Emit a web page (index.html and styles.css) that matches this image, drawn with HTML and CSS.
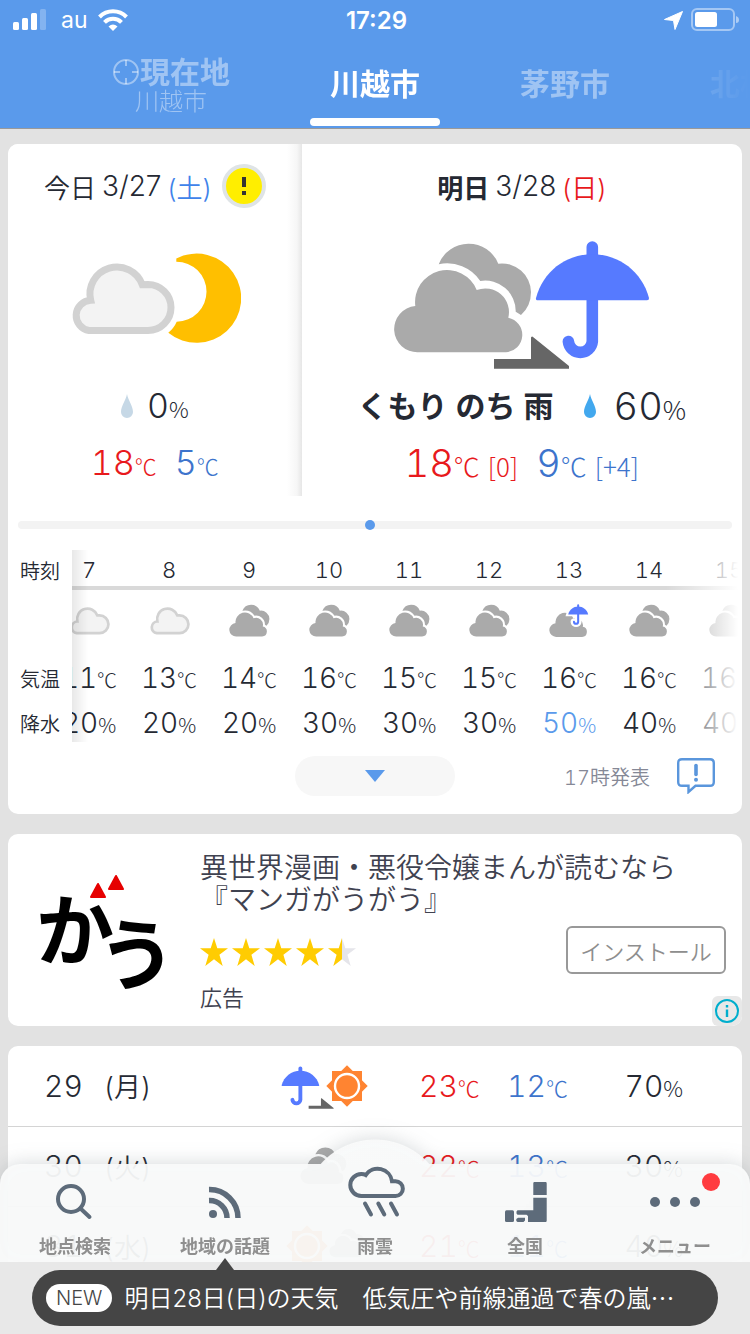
FILE: index.html
```html
<!DOCTYPE html>
<html lang="ja">
<head>
    <meta charset="utf-8">
    <meta name="viewport" content="width=device-width">
    <title>川越市の天気</title>
    <link rel="stylesheet" href="styles.css">
</head>
<body>
    <!-- shared weather icons -->
    <svg class="sprite" aria-hidden="true">
        <defs>
            <symbol id="cloud-light" viewBox="0 10 106 72">
                <path d="M20 77.5A15.2 15.2 0 0 1 21.7 47.3A27 27 0 0 1 73.3 31.7L79 31.5A23 23 0 0 1 79 77.5Z" fill="#f3f3f3" stroke="#d2d2d2" stroke-width="7"/>
            </symbol>
            <path id="front" d="M25 112.3A23.2 23.2 0 0 1 22.3 66A32 32 0 0 1 83.7 50A23.7 23.7 0 0 1 115.3 77.7A17.5 17.5 0 0 1 113 112.3Z"/>
            <g id="clouds" fill="#aaa">
                <use href="#front"/>
                <path d="M45.7 24.3A32 32 0 0 1 105.3 23.7A29 29 0 0 1 138 52Q138 66 128 75L122.7 71.7A30.5 30.5 0 0 0 87.3 41A40 40 0 0 0 45.7 24.3Z"/>
            </g>
            <symbol id="cloud-dark" viewBox="0 3 140 112"><use href="#clouds"/></symbol>
            <g id="umbrella">
                <path d="M199.3 7V101.5A12 12 0 0 1 175.4 101.5" fill="none" stroke="#567aff" stroke-width="11.6" stroke-linecap="round"/>
                <path d="M143 58C150 32 172 14.3 199.3 14.3S249 32 256 58Q256.3 60.3 254 60.3H145Q142.4 60.3 143 58Z" fill="#567aff"/>
            </g>
            <path id="then" d="M101 119H138V97.5Q139 96 140 97L176 126V128.7H101Z" fill="#666"/>
            <symbol id="cloud-rain" viewBox="0 0 140 116">
                <use href="#front" fill="#aaa"/>
                <g transform="translate(-20 0) scale(.6)">
                    <path d="M199.3 7V101.5A12 12 0 0 1 175.4 101.5" fill="none" stroke="#fff" stroke-width="38" stroke-linecap="round"/>
                    <path d="M143 58C150 32 172 14 199 14S249 32 256 58Z" fill="#fff" stroke="#fff" stroke-width="24"/>
                    <use href="#umbrella"/>
                </g>
            </symbol>
            <g id="sun">
                <path d="M-15-15H15V15H-15Z" fill="#ff8431"/>
                <path d="M0-20.7L20.7 0L0 20.7L-20.7 0Z" fill="#ff8431"/>
                <circle r="12" fill="none" stroke="#fff" stroke-width="2.4"/>
            </g>
            <symbol id="drop" viewBox="0 0 12 24">
                <path d="M6 0C7 6 12 12 12 18A6 6 0 0 1 0 18C0 12 5 6 6 0Z"/>
            </symbol>
            <symbol id="star" viewBox="0 0 28 28">
                <path d="M14 0L17.3 10.3H28L19.4 16.8L22.7 28L14 21.3L5.3 28L8.6 16.8L0 10.3H10.7Z"/>
            </symbol>
        </defs>
    </svg>

    <header class="header">
        <div class="status">
            <div class="status-left">
                <svg width="34" height="22" viewBox="0 0 34 22" fill="#fff">
                    <rect x="0" y="13" width="6" height="8" rx="1.5"/>
                    <rect x="9" y="9" width="6" height="12" rx="1.5"/>
                    <rect x="18" y="4" width="6" height="17" rx="1.5"/>
                    <rect x="27" y="0" width="6" height="21" rx="1.5" opacity=".25"/>
                </svg>
                <span>au</span>
                <svg width="30" height="22" viewBox="0 0 30 22" fill="none" stroke="#fff" stroke-width="4">
                    <path d="M1.5 8A19 19 0 0 1 28.5 8"/>
                    <path d="M6.5 13.3A12 12 0 0 1 23.5 13.3"/>
                    <path d="M10.5 17.5Q15 13.5 19.5 17.5L15 22Z" fill="#fff" stroke="none"/>
                </svg>
            </div>
            <time class="clock">17:29</time>
            <div class="status-right">
                <svg width="19" height="19" viewBox="0 0 19 19"><path d="M18.5 .5L11 18.5L9.5 9.5L.5 8.5Z" fill="#fff" stroke="#fff" stroke-linejoin="round"/></svg>
                <svg width="49" height="24" viewBox="0 0 49 24">
                    <rect x="1" y="1" width="42" height="21" rx="5" fill="none" stroke="#fff" stroke-opacity=".45" stroke-width="2"/>
                    <rect x="4" y="4" width="22" height="15" rx="2.5" fill="#fff"/>
                    <path d="M45 8Q48 9 48 12T45 15Z" fill="#fff" opacity=".5"/>
                </svg>
            </div>
        </div>
        <nav class="tabs">
            <a href="#" class="tab here">
                <span class="tab-name"><svg width="28" height="28" viewBox="0 0 28 28" fill="none" stroke="currentColor" stroke-width="2"><circle cx="14" cy="14" r="12"/><path d="M14 2V8M14 20V26M2 14H8M20 14H26"/></svg>現在地</span>
                <span class="tab-sub">川越市</span>
            </a>
            <a href="#" class="tab active">川越市</a>
            <a href="#" class="tab">茅野市</a>
            <a href="#" class="tab">北杜市</a>
        </nav>
    </header>

    <main>
        <section class="card">
            <div class="days">
                <div class="day today">
                    <h2 class="date">今日<span class="num">3/27</span><span class="sat">(土)</span>
                        <button class="alert" aria-label="注意報"><svg width="6" height="18" viewBox="0 0 6 18" fill="#333"><path d="M1 0H5V10H1ZM1 14H5V18H1Z"/></svg></button>
                    </h2>
                    <svg class="day-icon" width="172" height="130" viewBox="0 -13 172 130" role="img" aria-label="くもり時々晴れ">
                        <path d="M20 77.5A15.2 15.2 0 0 1 21.7 47.3A27 27 0 0 1 73.3 31.7L79 31.5A23 23 0 0 1 79 77.5Z" fill="#f3f3f3" stroke="#d2d2d2" stroke-width="7"/>
                        <path d="M107.3 5.5A44.6 44.6 0 1 1 99.3 79.7Q105 75 107.7 68.7A30 30 0 0 0 107.3 8.7Z" fill="#ffbf00"/>
                    </svg>
                    <p class="rain"><svg class="drop pale" width="12" height="24"><use href="#drop"/></svg><span class="num">0<small>%</small></span></p>
                    <p class="temps"><span class="high">18<small>℃</small></span><span class="low">5<small>℃</small></span></p>
                </div>
                <div class="day tomorrow">
                    <h2 class="date"><b>明日</b><span class="num">3/28</span><span class="sun">(日)</span></h2>
                    <svg class="day-icon" width="258" height="130" viewBox="0 0 258 130" role="img" aria-label="くもり のち 雨">
                        <use href="#clouds"/><use href="#umbrella"/><use href="#then"/>
                    </svg>
                    <p class="rain"><b>くもり のち 雨</b><svg class="drop" width="12" height="24"><use href="#drop"/></svg><span class="num">60<small>%</small></span></p>
                    <p class="temps"><span class="high">18<small>℃</small><i>[0]</i></span><span class="low">9<small>℃</small><i>[+4]</i></span></p>
                </div>
            </div>

            <input class="seek" type="range" min="0" max="71" value="35" aria-label="時刻">

            <div class="hours-wrap">
                <div class="hours" id="hours">
                    <table>
                        <tr class="time"><th>時刻</th><td>7</td><td>8</td><td>9</td><td>10</td><td>11</td><td>12</td><td>13</td><td>14</td><td>15</td></tr>
                        <tr class="icons"><th></th>
                            <td><svg width="41" height="32"><use href="#cloud-light"/></svg></td>
                            <td><svg width="41" height="32"><use href="#cloud-light"/></svg></td>
                            <td><svg width="41" height="34"><use href="#cloud-dark"/></svg></td>
                            <td><svg width="41" height="34"><use href="#cloud-dark"/></svg></td>
                            <td><svg width="41" height="34"><use href="#cloud-dark"/></svg></td>
                            <td><svg width="41" height="34"><use href="#cloud-dark"/></svg></td>
                            <td><svg width="41" height="34"><use href="#cloud-rain"/></svg></td>
                            <td><svg width="41" height="34"><use href="#cloud-dark"/></svg></td>
                            <td><svg width="41" height="34"><use href="#cloud-dark"/></svg></td>
                        </tr>
                        <tr class="temp"><th>気温</th><td>11<small>℃</small></td><td>13<small>℃</small></td><td>14<small>℃</small></td><td>16<small>℃</small></td><td>15<small>℃</small></td><td>15<small>℃</small></td><td>16<small>℃</small></td><td>16<small>℃</small></td><td>16<small>℃</small></td></tr>
                        <tr class="pop"><th>降水</th><td>20<small>%</small></td><td>20<small>%</small></td><td>20<small>%</small></td><td>30<small>%</small></td><td>30<small>%</small></td><td>30<small>%</small></td><td class="wet">50<small>%</small></td><td>40<small>%</small></td><td>40<small>%</small></td></tr>
                    </table>
                </div>
            </div>

            <div class="card-foot">
                <button class="expand" aria-label="もっと見る"><svg width="20" height="12" viewBox="0 0 20 12"><path d="M0 0H20L10 12Z" fill="#5a9aeb"/></svg></button>
                <div class="issued">
                    <span>17時発表</span>
                    <button class="report" aria-label="報告"><svg width="38" height="36" viewBox="0 0 38 36" fill="none" stroke="#5a96dc" stroke-width="2.4">
                        <path d="M5 1.2H33Q36.8 1.2 36.8 5V24Q36.8 27.8 33 27.8H18.5L11.5 34V27.8H5Q1.2 27.8 1.2 24V5Q1.2 1.2 5 1.2Z"/>
                        <path d="M19 7.5V16.5" stroke-width="3.6" stroke-linecap="round"/><circle cx="19" cy="21.8" r="2" fill="#5a96dc" stroke="none"/>
                    </svg></button>
                </div>
            </div>
        </section>

        <section class="card ad">
            <svg class="ad-logo" width="144" height="144" viewBox="0 0 144 144" role="img" aria-label="がう">
                <path d="M59 47L66 34L73 47ZM77 39L84 26L91 39Z" fill="#e60000" stroke="#e60000" stroke-width="2" stroke-linejoin="round"/>
                <text x="4" y="110">か</text>
                <text x="66" y="134">う</text>
            </svg>
            <div class="ad-body">
                <h3>異世界漫画・悪役令嬢まんが読むなら『マンガがうがう』</h3>
                <div class="ad-stars" role="img" aria-label="4.5">
                    <svg width="28" height="28" fill="#ffcc02"><use href="#star"/></svg>
                    <svg width="28" height="28" fill="#ffcc02"><use href="#star"/></svg>
                    <svg width="28" height="28" fill="#ffcc02"><use href="#star"/></svg>
                    <svg width="28" height="28" fill="#ffcc02"><use href="#star"/></svg>
                    <svg width="28" height="28" viewBox="0 0 28 28"><path d="M14 0L17.3 10.3H28L19.4 16.8L22.7 28L14 21.3Z" fill="#e5e5ea"/><path d="M14 0V21.3L5.3 28L8.6 16.8L0 10.3H10.7Z" fill="#ffcc02"/></svg>
                </div>
                <p>広告</p>
            </div>
            <button class="install">インストール</button>
            <a href="#" class="ad-info" aria-label="広告について"><svg width="24" height="24" viewBox="0 0 24 24" fill="#00aecd"><circle cx="12" cy="12" r="11" fill="none" stroke="#00aecd" stroke-width="2"/><path d="M10.8 6H13.2V8.5H10.8ZM10.8 10.5H13.2V18H10.8Z"/></svg></a>
        </section>

        <section class="card">
            <table class="week">
                <tr>
                    <th>29</th><td class="dow">(月)</td>
                    <td class="icon"><svg width="88" height="46" viewBox="0 0 88 46"><g transform="translate(-46 3) scale(.333)"><use href="#umbrella"/></g><g transform="translate(-5 3) scale(.333)"><use href="#then"/></g><use href="#sun" x="67" y="23"/></svg></td>
                    <td class="high">23<small>℃</small></td><td class="low">12<small>℃</small></td><td>70<small>%</small></td>
                </tr>
                <tr>
                    <th>30</th><td class="dow">(火)</td>
                    <td class="icon"><svg width="47" height="38"><use href="#cloud-dark"/></svg></td>
                    <td class="high">22<small>℃</small></td><td class="low">13<small>℃</small></td><td>30<small>%</small></td>
                </tr>
                <tr>
                    <th>31</th><td class="dow">(水)</td>
                    <td class="icon"><svg width="88" height="46" viewBox="0 0 88 46"><use href="#sun" x="27" y="23"/><g transform="translate(49 5) scale(.26)"><use href="#clouds"/></g></svg></td>
                    <td class="high">21<small>℃</small></td><td class="low">11<small>℃</small></td><td>40<small>%</small></td>
                </tr>
            </table>
        </section>
    </main>

    <footer class="dock">
        <nav class="menu">
            <a href="#"><svg width="48" height="48" viewBox="0 0 48 48" fill="none" stroke="#5d6b7a" stroke-width="4"><circle cx="20" cy="24" r="13"/><path d="M29.5 33.5L38.5 42" stroke-linecap="round"/></svg>地点検索</a>
            <a href="#"><svg width="48" height="48" viewBox="0 0 48 48" fill="none" stroke="#5d6b7a" stroke-width="5.5"><circle cx="12" cy="39" r="4" fill="#5d6b7a" stroke="none"/><path d="M8 25.5A17.5 17.5 0 0 1 26 43M8 14.5A28.5 28.5 0 0 1 37 43"/></svg>地域の話題</a>
            <a href="#"><svg width="60" height="64" viewBox="0 0 60 64" fill="none" stroke="#5d6b7a" stroke-width="4"><path d="M16.3 37A11 11 0 0 1 16.3 15Q19 15 20.7 16A14.5 14.5 0 0 1 47 22.3H50.5A7.3 7.3 0 0 1 50.5 37Z"/><path d="M20 44.5L26 55.5M33.3 44.5L39.3 55.5M46 44.5L52 55.5" stroke-linecap="round"/></svg>雨雲</a>
            <a href="#"><svg width="48" height="48" viewBox="0 0 48 48" fill="#5d6b7a"><path d="M33.5 7H44.5Q45.7 7 45.7 8.2V20H32.3V8.2Q32.3 7 33.5 7ZM32.3 22.7H45.7V45.8Q45.7 47 44.5 47H27V41L25.5 39.7H16.5L15.5 38.5V36.5L16.5 35.3H32.3Z"/><rect x="4" y="35.3" width="9" height="11.7" rx="1.5"/><path d="M17 42.7H24V45.5L22.5 47H16.5L15.3 46V44Z"/></svg>全国</a>
            <a href="#" class="more"><svg width="60" height="48" viewBox="0 0 60 48" fill="#5d6b7a"><circle cx="10" cy="27" r="5"/><circle cx="30" cy="27" r="5"/><circle cx="50" cy="27" r="5"/></svg>メニュー</a>
        </nav>
        <div class="news">
            <a href="#" class="toast"><span class="new">NEW</span><span class="news-text">明日28日(日)の天気　低気圧や前線通過で春の嵐<span class="dots">⋯</span></span></a>
        </div>
    </footer>

    <script>
        // start partway into the 7:00 column
        document.getElementById('hours').scrollLeft = 23;
    </script>
</body>
</html>
```
FILE: styles.css
```css
* {
    box-sizing: border-box;
}
body {
    margin: 0;
    background: #e2e2e2;
    color: #252933;
    font-family: Inter, "Noto Sans CJK JP", sans-serif;
    font-weight: 350;
}
h2, h3, p {
    margin: 0;
    font-weight: inherit;
}
a {
    color: inherit;
    text-decoration: none;
}
button {
    padding: 0;
    border: 0;
    background: none;
    font: inherit;
    color: inherit;
}
svg {
    display: block;
    flex: none;
}
b {
    font-weight: 600;
}
i {
    font-style: normal;
}
table {
    font-variant-numeric: tabular-nums;
}
small, i {
    font-family: "Noto Sans CJK JP", sans-serif;
    font-weight: 300;
    line-height: 1;
}
.sprite {
    position: absolute;
    width: 0;
    height: 0;
}

/* header */
.header {
    background: #5a9aeb;
    border-bottom: 1px solid #999;
    color: #fff;
}
.status {
    display: grid;
    grid-template-columns: 1fr auto 1fr;
    align-items: center;
    height: 40px;
    padding: 0 10px 0 13px;
}
.status-left, .status-right {
    display: flex;
    align-items: center;
}
.status-left {
    gap: 10px;
    font-size: 23px;
    font-weight: 400;
}
.status-left span {
    padding-left: 4px;
}
.status-right {
    justify-content: flex-end;
    gap: 8px;
}
.clock {
    font-size: 24px;
    font-weight: 600;
}
.tabs {
    display: flex;
    gap: 100px;
    height: 88px;
    padding-left: 112px;
    overflow: hidden;
    -webkit-mask-image: linear-gradient(to right, #000 80%, transparent 100%);
    mask-image: linear-gradient(to right, #000 80%, transparent 100%);
}
.tab {
    position: relative;
    display: flex;
    flex: none;
    flex-direction: column;
    justify-content: center;
    align-items: center;
    padding-bottom: 4px;
    font-size: 30px;
    font-weight: 600;
    color: rgba(255, 255, 255, .42);
}
.tab.here {
    padding: 4px 0 0;
}
.tab.active {
    color: #fff;
}
.tab.active::after {
    content: "";
    position: absolute;
    left: 50%;
    bottom: 2px;
    width: 130px;
    height: 8px;
    margin-left: -65px;
    border-radius: 4px;
    background: #fff;
}
.tab-name {
    display: flex;
    align-items: center;
    line-height: 32px;
}
.tab-sub {
    font-size: 24px;
    font-weight: 300;
    line-height: 28px;
}

/* cards */
main {
    display: flex;
    flex-direction: column;
    gap: 20px;
    padding: 15px 8px;
}
.card {
    position: relative;
    background: #fff;
    border-radius: 10px;
    overflow: hidden;
}
.high, .sun {
    color: #e8191c;
}
.low {
    color: #3d74cc;
}
.sat {
    color: #3f83ea;
}

/* today and tomorrow */
.days {
    display: grid;
    grid-template-columns: 2fr 3fr;
}
.day {
    display: flex;
    flex-direction: column;
    align-items: center;
    padding-top: 20px;
}
.today {
    background: linear-gradient(to left, #e6e6e6, #f6f6f6 5px, #fff 15px);
}
.date {
    display: flex;
    align-items: center;
    gap: 6px;
    height: 44px;
    font-size: 26px;
}
.date .num {
    font-size: 28px;
}
.alert {
    display: flex;
    justify-content: center;
    align-items: center;
    width: 44px;
    height: 44px;
    margin-left: 4px;
    border: 4px solid #dfe4e6;
    border-radius: 50%;
    background: #ffee00;
}
.day-icon {
    margin: 32px 0 12px;
}
.rain, .temps {
    display: flex;
    align-items: center;
    height: 48px;
    line-height: 48px;
    font-weight: 300;
    font-variant-numeric: tabular-nums;
}
.temps {
    gap: 18px;
    height: 66px;
}
.rain .num, .temps span {
    font-size: 34px;
}
.rain small, .temps small {
    font-size: 22px;
}
.tomorrow .rain .num, .tomorrow .temps span {
    font-size: 38px;
}
.tomorrow .rain small, .tomorrow .temps small, .tomorrow i {
    font-size: 26px;
}
.tomorrow i {
    margin-left: 8px;
}
.rain b {
    margin-right: 30px;
    font-size: 30px;
}
.drop {
    margin-right: 18px;
    fill: #42a8ee;
}
.drop.pale {
    margin-right: 14px;
    fill: #c6d8e6;
}

/* seek bar */
.seek {
    display: block;
    -webkit-appearance: none;
    appearance: none;
    width: calc(100% - 20px);
    height: 8px;
    margin: 25px 10px 21px;
    border-radius: 4px;
    background: #f3f3f3;
}
.seek::-webkit-slider-thumb {
    -webkit-appearance: none;
    width: 10px;
    height: 10px;
    border-radius: 50%;
    background: #5a9aeb;
}

/* hourly table */
.hours-wrap {
    position: relative;
}
.hours-wrap::after {
    content: "";
    position: absolute;
    top: 0;
    right: 0;
    bottom: 0;
    width: 76px;
    background: linear-gradient(to right, rgba(255, 255, 255, 0), #fff 95%);
}
.hours {
    overflow-x: auto;
    scrollbar-width: none;
}
.hours table {
    width: 784px;
    table-layout: fixed;
    border-spacing: 0;
}
.hours th, .hours td {
    padding: 0;
    text-align: center;
}
.hours th {
    position: sticky;
    left: 0;
    z-index: 1;
    width: 64px;
    background: #fff;
    font-size: 20px;
    font-weight: inherit;
}
.hours th::after {
    content: "";
    position: absolute;
    top: 0;
    bottom: 0;
    left: 100%;
    width: 16px;
    background: linear-gradient(to right, rgba(0, 0, 0, .09), transparent);
}
.hours td {
    font-size: 28px;
    white-space: nowrap;
}
.hours .time td {
    padding-top: 4px;
    border-bottom: 4px solid #d9d9d9;
    font-size: 22px;
}
.hours small {
    font-size: 20px;
}
.hours svg {
    margin: 0 auto;
}
.time {
    height: 40px;
}
.icons {
    height: 62px;
}
.temp {
    height: 52px;
}
.pop {
    height: 38px;
}
.hours .wet {
    color: #5a9aeb;
}

.card-foot {
    display: grid;
    grid-template-columns: 1fr 160px 1fr;
    align-items: center;
    padding: 14px 27px 18px;
}
.expand {
    grid-column: 2;
    display: flex;
    justify-content: center;
    align-items: center;
    height: 40px;
    border-radius: 20px;
    background: #f7f7f7;
}
.issued {
    display: flex;
    justify-content: flex-end;
    align-items: center;
    gap: 27px;
    font-size: 20px;
    font-variant-numeric: tabular-nums;
    color: #858896;
}

/* ad */
.ad {
    display: grid;
    grid-template-columns: 144px 1fr auto;
    padding: 16px 16px 12px 24px;
}
.ad-logo text {
    font-family: "Noto Sans CJK JP", sans-serif;
    font-size: 78px;
    font-weight: 700;
}
.ad-body {
    grid-column: 2 / 4;
    grid-row: 1;
    padding: 2px 0 0 24px;
}
.ad h3 {
    font-size: 28px;
    line-height: 32px;
    color: #3f4250;
}
.ad-stars {
    display: flex;
    gap: 4px;
    margin: 22px 0 16px;
}
.ad p {
    font-size: 22px;
    line-height: 32px;
    color: #3f4250;
}
.install {
    grid-column: 3;
    grid-row: 1;
    width: 160px;
    height: 48px;
    margin-top: 76px;
    border: 2px solid #999;
    border-radius: 6px;
    font-size: 22px;
    color: #8e8e8e;
}
.ad-info {
    position: absolute;
    right: 0;
    bottom: 0;
    padding: 3px;
    border-radius: 6px;
    background: #e8e8e8;
}

/* weekly table */
.week {
    width: 100%;
    table-layout: fixed;
    border-collapse: collapse;
    font-size: 30px;
}
.week tr {
    height: 80px;
    border-bottom: 1px solid #d4d4d4;
}
.week th, .week td {
    padding: 0;
    font-weight: inherit;
    text-align: left;
}
.week th {
    width: 13%;
    padding-left: 36px;
}
.week .dow {
    width: 17%;
    font-size: 27px;
}
.week .icon {
    width: 26%;
}
.week .icon svg {
    margin: 0 auto;
}
.week .high {
    width: 12%;
}
.week .low {
    width: 16%;
}
.week small {
    font-size: 22px;
}

/* bottom menu */
.dock {
    position: fixed;
    left: 0;
    right: 0;
    bottom: 0;
    z-index: 2;
}
.menu {
    position: relative;
    display: grid;
    grid-template: 98px / repeat(5, 1fr);
    border-radius: 20px 20px 0 0;
    background: rgba(250, 251, 251, .94);
    filter: drop-shadow(0 0 10px rgba(80, 95, 105, .26));
    font-size: 18px;
    font-weight: 600;
    color: #8f8f8f;
}
/* bump behind the rain cloud button */
.menu::before {
    content: "";
    position: absolute;
    left: 50%;
    bottom: 100%;
    width: 120px;
    height: 25px;
    margin-left: -60px;
    background: radial-gradient(circle at 50% 73px, rgba(250, 251, 251, .94) 72px, transparent 73px);
}
.menu a {
    position: relative;
    display: flex;
    flex-direction: column;
    justify-content: flex-end;
    align-items: center;
    gap: 12px;
    padding-bottom: 3px;
    line-height: 24px;
}
.more::before {
    content: "";
    position: absolute;
    top: 9px;
    left: 50%;
    width: 18px;
    height: 18px;
    margin-left: 27px;
    border-radius: 50%;
    background: #ff3b3f;
}
.news {
    position: relative;
    padding: 8px 32px;
    background: #e8e8e8;
}
.news::before {
    content: "";
    position: absolute;
    top: -4px;
    left: 30%;
    margin-left: -9px;
    border: 9px solid transparent;
    border-top: 0;
    border-bottom: 12px solid #454545;
}
.toast {
    display: flex;
    align-items: center;
    gap: 12px;
    height: 56px;
    padding: 0 20px 0 14px;
    border-radius: 28px;
    background: #454545;
    font-size: 24px;
    color: #fff;
}
.new {
    padding: 0 10px;
    border-radius: 14px;
    background: #fff;
    font-size: 20px;
    line-height: 28px;
    color: #454545;
}
.news-text {
    overflow: hidden;
    line-height: 32px;
    white-space: nowrap;
    text-overflow: ellipsis;
}
.dots {
    font-family: "Noto Sans CJK JP", sans-serif;
}
```
